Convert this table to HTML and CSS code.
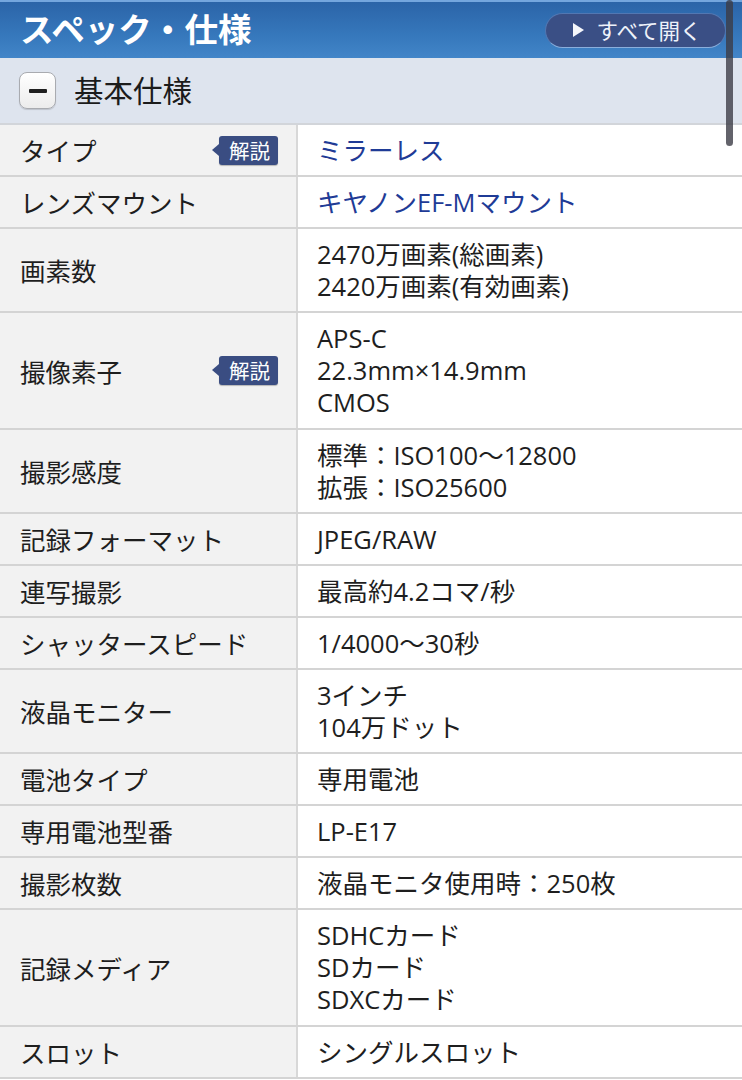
FILE: index.html
```html
<!DOCTYPE html>
<html lang="ja">
<head>
<meta charset="utf-8">
<title>スペック・仕様</title>
<link rel="stylesheet" href="styles.css">
</head>
<body>
<div class="page">
  <header class="top">
    <h1 class="title">スペック・仕様</h1>
    <button class="open-all"><span class="tri"></span>すべて開く</button>
  </header>
  <div class="section">
    <span class="toggle"><span class="minus"></span></span>
    <h2 class="section-title">基本仕様</h2>
  </div>
  <div class="spec">
    <div class="row"><div class="label">タイプ<span class="badge">解説</span></div><div class="value link">ミラーレス</div></div>
    <div class="row"><div class="label">レンズマウント</div><div class="value link">キヤノンEF-Mマウント</div></div>
    <div class="row"><div class="label">画素数</div><div class="value">2470万画素(総画素)<br>2420万画素(有効画素)</div></div>
    <div class="row tall"><div class="label">撮像素子<span class="badge">解説</span></div><div class="value">APS-C<br>22.3mm×14.9mm<br>CMOS</div></div>
    <div class="row"><div class="label">撮影感度</div><div class="value">標準：ISO100〜12800<br>拡張：ISO25600</div></div>
    <div class="row"><div class="label">記録フォーマット</div><div class="value">JPEG/RAW</div></div>
    <div class="row"><div class="label">連写撮影</div><div class="value">最高約4.2コマ/秒</div></div>
    <div class="row"><div class="label">シャッタースピード</div><div class="value">1/4000〜30秒</div></div>
    <div class="row"><div class="label">液晶モニター</div><div class="value">3インチ<br>104万ドット</div></div>
    <div class="row"><div class="label">電池タイプ</div><div class="value">専用電池</div></div>
    <div class="row"><div class="label">専用電池型番</div><div class="value">LP-E17</div></div>
    <div class="row"><div class="label">撮影枚数</div><div class="value">液晶モニタ使用時：250枚</div></div>
    <div class="row tall"><div class="label">記録メディア</div><div class="value">SDHCカード<br>SDカード<br>SDXCカード</div></div>
    <div class="row"><div class="label">スロット</div><div class="value">シングルスロット</div></div>
  </div>
  <div class="scrollbar"></div>
</div>
</body>
</html>
```
FILE: styles.css
```css
* { box-sizing: border-box; }
html, body { margin: 0; padding: 0; }
body {
  font-family: "Noto Sans CJK JP", "Noto Sans", sans-serif;
  color: #1e1e1e;
  background: #fff;
}
.page { position: relative; width: 742px; overflow: hidden; }

.top {
  height: 58px;
  display: flex;
  align-items: center;
  justify-content: space-between;
  padding: 0 16px 0 20px;
  background: linear-gradient(#2b64a8, #3678bc 60%, #4285c8);
  border-top: 2px solid #74a6de;
}
.title {
  margin: 0;
  font-size: 33.5px;
  font-weight: 700;
  color: #fff;
  line-height: 1;
  padding-bottom: 5px;
}
.open-all {
  width: 181px;
  height: 35px;
  margin-top: 1px;
  border-radius: 18px;
  border: 1px solid #5277b2;
  border-bottom-color: #8aaedc;
  background: #3a4f85;
  color: #eef2fa;
  font-family: inherit;
  font-size: 21.5px;
  display: flex;
  align-items: center;
  justify-content: center;
  gap: 12px;
  padding: 0 0 2px 4px;
}
.tri {
  width: 0; height: 0;
  border-left: 11px solid #f4f6fb;
  border-top: 7px solid transparent;
  border-bottom: 7px solid transparent;
}

.section {
  height: 67px;
  background: #dee4ee;
  border-bottom: 2px solid #d2d5da;
  display: flex;
  align-items: center;
  padding-left: 19px;
  gap: 18px;
}
.toggle {
  width: 37px; height: 37px;
  border-radius: 8px;
  border: 1px solid #a9abb0;
  background: linear-gradient(#ffffff, #ececec);
  box-shadow: 0 1px 1px rgba(0,0,0,0.15);
  display: flex;
  align-items: center;
  justify-content: center;
}
.minus { width: 18px; height: 4px; background: #1f1f1f; border-radius: 1px; }
.section-title {
  margin: 0;
  font-size: 29.5px;
  font-weight: 400;
  color: #1b1b1b;
  line-height: 1;
  padding-bottom: 1px;
}

.spec { font-size: 25.5px; line-height: 32px; }
.row {
  display: flex;
  border-bottom: 2px solid #d4d4d4;
}
.label {
  width: 298px;
  flex: none;
  background: #f2f2f2;
  border-right: 2px solid #d8d8d8;
  padding: 9px 18px 9px 20px;
  display: flex;
  align-items: center;
  justify-content: space-between;
}
.value {
  flex: 1;
  padding: 9px 16px 9px 19px;
  background: #fff;
  font-family: "Open Sans", "Noto Sans CJK JP", sans-serif;
}
.tall .value { padding-bottom: 10px; }
.link { color: #1f3b96; }

.badge {
  position: relative;
  background: #3a4d82;
  color: #fff;
  font-size: 20.5px;
  line-height: 29px;
  height: 29px;
  padding: 0 8px 0 10px;
  border-radius: 3px;
  box-shadow: 0 1px 1px rgba(0,0,0,0.25);
}
.badge::before {
  content: "";
  position: absolute;
  left: -7px;
  top: 8px;
  border-right: 7px solid #3a4d82;
  border-top: 6px solid transparent;
  border-bottom: 6px solid transparent;
}

.scrollbar {
  position: absolute;
  left: 726px;
  top: 0;
  width: 7px;
  height: 146px;
  border-radius: 4px;
  background: rgba(60,60,70,0.8);
}
```
